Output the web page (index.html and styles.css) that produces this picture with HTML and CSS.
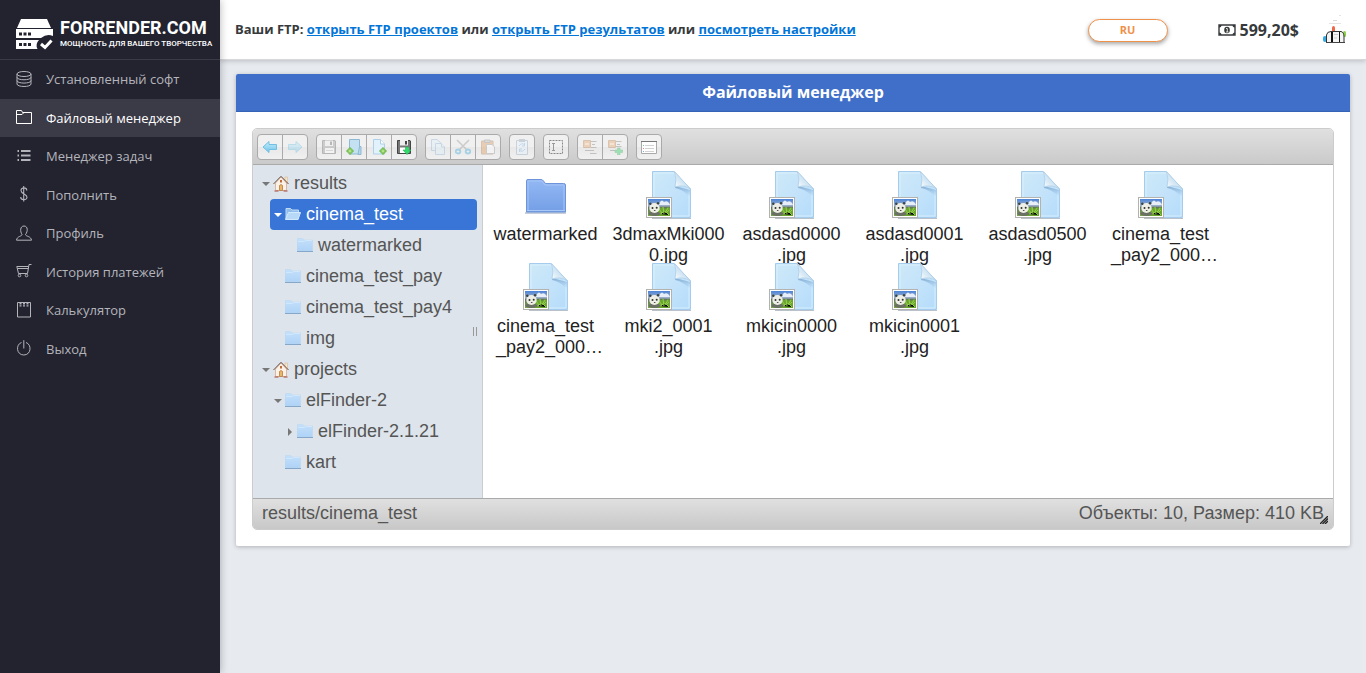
FILE: index.html
```html
<!DOCTYPE html>
<html lang="ru">
<head>
<meta charset="utf-8">
<meta name="viewport" content="width=device-width, initial-scale=1">
<title>Файловый менеджер</title>
<link rel="stylesheet" href="styles.css">
</head>
<body>
<svg class="defs" aria-hidden="true">
  <defs>
    <linearGradient id="g-page" x1="0" y1="0" x2="1" y2="1"><stop offset="0" stop-color="#cde9f8"/><stop offset="0.5" stop-color="#c4e3fa"/><stop offset="1" stop-color="#b4dcfb"/></linearGradient>
    <linearGradient id="g-fold" x1="0" y1="1" x2="1" y2="0"><stop offset="0" stop-color="#ffffff"/><stop offset="0.5" stop-color="#cbe2f2"/><stop offset="1" stop-color="#8fb8dc"/></linearGradient>
    <linearGradient id="g-shade" x1="0" y1="0" x2="0" y2="1"><stop offset="0" stop-color="#6c9ac4" stop-opacity=".8"/><stop offset="1" stop-color="#9cc8ee" stop-opacity="0"/></linearGradient>
    <linearGradient id="g-folder" x1="0" y1="0" x2="0" y2="1"><stop offset="0" stop-color="#93b8f4"/><stop offset="1" stop-color="#749fe6"/></linearGradient>
    <linearGradient id="g-small" x1="0" y1="0" x2="0" y2="1"><stop offset="0" stop-color="#c4e0fb"/><stop offset="1" stop-color="#aed2f6"/></linearGradient>
    <linearGradient id="g-sky" x1="0" y1="0" x2="0" y2="1"><stop offset="0" stop-color="#4c84d8"/><stop offset="0.4" stop-color="#9eb0c8"/><stop offset="0.5" stop-color="#63735f"/><stop offset="1" stop-color="#7aa848"/></linearGradient>
    <linearGradient id="g-arrow" x1="0" y1="0" x2="0" y2="1"><stop offset="0" stop-color="#c5edfb"/><stop offset="1" stop-color="#6fc3ea"/></linearGradient>
  </defs>
  <symbol id="jpg" viewBox="-1 0 48 48">
    <path d="M6 47.500H45" stroke="#8b9aa8" stroke-opacity=".6"/>
    <path d="M6.500.500H28L44.500 18V46.500H6.500Z" fill="url(#g-page)" stroke="#a5cbed"/>
    <path d="M8 2H27.500L43 18.500V45H8Z" fill="none" stroke="#dff2fd" stroke-opacity=".8"/>
    <path d="M29 15L44 19V26Q36 18 29 17Z" fill="url(#g-shade)"/>
    <path d="M28.500.500Q31 8 29 16Q37 13 44.500 18Z" fill="url(#g-fold)" stroke="#a9cbe6" stroke-width=".7"/>
    <rect x=".5" y="26.500" width="25" height="20" fill="#fff" stroke="#b4b2ae"/>
    <rect x="2" y="28" width="22" height="17" fill="url(#g-sky)"/>
    <path d="M14 31q2-3 4 0q3-2 5 1l1 2H13Z" fill="#e8eef7"/>
    <path d="M10 37l3-1 2 1 2-1 2 2 3-2 2 1V45H9Z" fill="#69a52f"/>
    <path d="M13 38l3 4M17 36l1 7M22 37l-3 5M14 43l5-3 4 4M12 41l4 2M21 41l2-2" stroke="#94cf4a"/>
    <ellipse cx="8.500" cy="42.700" rx="6" ry="2.300" fill="#6b7064"/>
    <ellipse cx="8.500" cy="37" rx="5.200" ry="5" fill="#eeeee6"/>
    <circle cx="4.300" cy="32.700" r="1.200" fill="#3c433e"/><circle cx="12" cy="32.200" r="1.200" fill="#3c433e"/>
    <circle cx="6.500" cy="37" r="1" fill="#2c332e"/><circle cx="10.700" cy="36.800" r="1" fill="#2c332e"/>
    <ellipse cx="8.700" cy="39.500" rx=".9" ry=".6" fill="#3c433e"/>
  </symbol>
  <symbol id="bigfolder" viewBox="0 0 48 48">
    <path d="M3 42H44" stroke="#8794ac" stroke-width="1.500" stroke-opacity=".6"/>
    <path d="M4.500 41V9.500Q4.500 8.500 6 8.500H19Q20.500 8.500 21.500 10L23.500 12.500H41.500Q43.500 12.500 43.500 14V41Z" fill="url(#g-folder)" stroke="#6d94d8"/>
    <path d="M6 39.500V10H20L23 14H42V39.500" fill="none" stroke="#a6c5f7"/>
    <path d="M5 39.500H43" stroke="#a9c8f8"/>
  </symbol>
  <symbol id="folder" viewBox="0 1 16 16">
    <path d="M0 14V2.500Q0 1.500 1 1.500H5.500L7.500 3H15.500V14Z" fill="url(#g-small)" stroke="#b9d6ef" stroke-width=".5"/>
    <path d="M1 4.500H7L8.500 3.500H15" fill="none" stroke="#d0e8fc"/><path d="M0 14.500H16" stroke="#86a7ca"/>
  </symbol>
  <symbol id="folder-open" viewBox="0 1 16 16">
    <path d="M1 13V2.500H5.500L7 4H13.500V13Z" fill="#8fbdec" stroke="#c0dcf5"/>
    <path d="M.5 13.500L3.500 6.500H15.500L13 13.500Z" fill="#b7d8f7" stroke="#d3e9fc"/>
  </symbol>
  <symbol id="home" viewBox="0 1 16 16">
    <path d="M12 2h2.500v6h-2.500z" fill="#f3e6cc" stroke="#d8b98e" stroke-width=".6"/>
    <path d="M2.500 8L8 2L13.500 8V15.500H2.500Z" fill="#fbf1e6" stroke="#d8b8a2"/>
    <path d="M.5 9L8 1.300L15.500 9" fill="none" stroke="#6b5048"/>
    <rect x="7" y="5" width="2" height="2.500" fill="#c0703c"/>
    <path d="M6.500 15.500V10.500Q8 8.500 9.500 10.500V15.500Z" fill="#e9b766" stroke="#b57b45" stroke-width=".8"/>
    <path d="M1.500 16H5.500M10.500 16H14.500" stroke="#a3483c"/>
  </symbol>
  <symbol id="plus" viewBox="0 0 8 8"><path d="M3 1H5V3H7V5H5V7H3V5H1V3H3Z" fill="#b0e38a" stroke="#69b545"/></symbol>
</svg>

<div class="app">
  <aside class="sidebar">
    <a class="logo" href="#">
      <svg width="38" height="32" viewBox="0 0 38 32" aria-hidden="true">
        <path d="M5 1H31L35 10H1Z" fill="#fff"/>
        <path d="M0 11H37V18Q31 15 25 20H0Z" fill="#fff"/>
        <path d="M0 22H23Q19 26 21.500 31H0Z" fill="#fff"/>
        <path d="M3 14.500h3v3h-3zM7.500 14.500h3v3h-3zM12 14.500h3v3h-3zM3 25h3v3h-3zM7.500 25h3v3h-3zM12 25h3v3h-3z" fill="#22232f"/>
        <path d="M25 26L29 29.500L35.500 22.500" fill="none" stroke="#fff" stroke-width="3"/>
      </svg>
      <span class="logo-text"><span class="logo-name">FORRENDER.COM</span><span class="logo-tag">МОЩНОСТЬ ДЛЯ ВАШЕГО ТВОРЧЕСТВА</span></span>
    </a>
    <nav class="menu">
      <a class="menu-item" href="#"><svg viewBox="0 0 16 16"><ellipse cx="8" cy="3" rx="7" ry="2.500"/><path d="M1 3V13C1 16.300 15 16.300 15 13V3M1 6.300C1 9.600 15 9.600 15 6.300M1 9.600C1 12.900 15 12.900 15 9.600"/></svg>Установленный софт</a>
      <a class="menu-item active" href="#"><svg viewBox="0 0 16 16"><path d="M.5 14.500V1.500H5.500L6.500 3.500H15.500V14.500ZM.5 5.500H6L8 3.500"/></svg>Файловый менеджер</a>
      <a class="menu-item" href="#"><svg viewBox="0 0 16 16"><path d="M5 3H14.500M5 7.500H14.500M5 12H14.500M1.500 3H3M1.500 7.500H3M1.500 12H3" stroke-width="2"/></svg>Менеджер задач</a>
      <a class="menu-item" href="#"><svg viewBox="0 0 16 16"><path d="M7.700 0V15.500M10.800 4.500C10.800 1 5 1 5 4.500S11 8 11 11.300S4.700 14.500 4.700 11" stroke-width="1.100"/></svg>Пополнить</a>
      <a class="menu-item" href="#"><svg viewBox="0 0 16 16"><path d="M6 9.500C4 6.500 4 1 8 1S12 6.500 9.500 9.500C9.500 11.500 15 11 15.500 15.200H.5C1 11 6 11.500 6 9.500Z"/></svg>Профиль</a>
      <a class="menu-item" href="#"><svg viewBox="0 0 16 16"><path d="M15.500 1.500H13L11.500 10.500H2.500L.8 3.500H12.500M1.500 5.500H12.500"/><circle cx="3.500" cy="12.500" r="1.300"/><circle cx="10.500" cy="12.500" r="1.300"/></svg>История платежей</a>
      <a class="menu-item" href="#"><svg viewBox="0 0 16 16"><path d="M1.500.500H14.500V15H1.500Z"/><path d="M4.500 1V4.500M8 1V4.500M11.500 1V4.500" stroke-width="2" stroke-dasharray="1.500 .7"/></svg>Калькулятор</a>
      <a class="menu-item" href="#"><svg viewBox="0 0 16 16"><path d="M7.800.200V8.500M5.500 2.500C-.5 4.500.3 15 7.800 15S16 4.500 10 2.500"/></svg>Выход</a>
    </nav>
  </aside>

  <div class="main">
    <header class="topbar">
      <p class="ftp">Ваши FTP: <a href="#">открыть FTP проектов</a> или <a href="#">открыть FTP результатов</a> или <a href="#">посмотреть настройки</a></p>
      <div class="account">
        <button class="lang" type="button">RU</button>
        <div class="balance">
          <svg width="18" height="12" viewBox="0 0 18 12" aria-hidden="true"><path d="M1 1H17V11H1Z" fill="#fff" stroke="#373a3c" stroke-width="1.400"/><path d="M1 1H3.500Q3.500 3.500 1 3.500ZM17 1H14.500Q14.500 3.500 17 3.500ZM1 11H3.500Q3.500 8.500 1 8.500ZM17 11H14.500Q14.500 8.500 17 8.500Z" fill="#373a3c"/><ellipse cx="9" cy="6" rx="2.800" ry="3.300" fill="#373a3c"/><path d="M8 4.500H9.300V8M8 8H10.500" fill="none" stroke="#fff" stroke-width=".8"/></svg>
          <span>599,20$</span>
        </div>
        <svg class="avatar" width="24" height="30" viewBox="0 0 24 30" role="img" aria-label="Аватар">
          <path d="M16 .5h2M6 8.500h12" stroke="#e4e4e4"/><path d="M10 5.500h4" stroke="#d8d8d8"/>
          <rect x="9" y="11" width="3" height="6" rx="1.500" fill="#ef6848"/><rect x="20" y="16" width="3" height="6" rx="1.500" fill="#8ed04b"/><rect x="0" y="21" width="4" height="6" rx="2" fill="#38a8e0"/>
          <path d="M3.500 27.500V20Q4 16.500 8 16.500H18Q21 17 21 22V27" fill="#f4f4f4" stroke="#333"/><path d="M9 17V28" stroke="#111" stroke-width="2"/><path d="M16.500 17V27" stroke="#111"/><path d="M3 27.500H22" stroke="#444"/><path d="M11 19.500h4M11 23h3" stroke="#ccc"/>
        </svg>
      </div>
    </header>

    <main class="content">
      <section class="card">
        <h1 class="card-title">Файловый менеджер</h1>
        <div class="card-body">
          <div class="finder">
            <div class="toolbar">
              <div class="group">
                <button type="button" aria-label="Назад"><svg viewBox="0 0 16 16"><path d="M1 8L7 2.500V5.500H14.500V10.500H7V13.500Z" fill="url(#g-arrow)" stroke="#72bfe2"/></svg></button>
                <button type="button" aria-label="Вперёд" disabled><svg viewBox="0 0 16 16"><path d="M15 8L9 2.500V5.500H1.500V10.500H9V13.500Z" fill="url(#g-arrow)" stroke="#72bfe2"/></svg></button>
              </div>
              <div class="group">
                <button type="button" aria-label="Сохранить" disabled><svg viewBox="0 0 16 16"><path d="M1.500 1.500H14L14.500 2V14.500H1.500Z" fill="#999" stroke="#666"/><path d="M4 1.500H12V7H4Z" fill="#eee"/><path d="M9 2.500H11V6H9Z" fill="#666"/><path d="M4 9H13V14H4Z" fill="#fff"/><path d="M5 11.500H12" stroke="#bbb"/></svg></button>
                <button type="button" aria-label="Новая папка"><svg viewBox="0 0 16 16"><path d="M3.500.500H13.500V15H3.500Z" fill="#c3e1f0" stroke="#8fb9d3"/><path d="M13.500 7.500H15V15.500H12Z" fill="#b4d8ea" stroke="#8fb9d3"/><use href="#plus" x="0" y="8" width="8" height="8"/></svg></button>
                <button type="button" aria-label="Новый файл"><svg viewBox="0 0 16 16"><path d="M2.500.500H9.500L13.500 5V15H2.500Z" fill="#e1f2fc" stroke="#afd0e7"/><path d="M9.500.500V5H13.500" fill="#fff" stroke="#afd0e7"/><use href="#plus" x="8" y="8" width="8" height="8"/></svg></button>
                <button type="button" aria-label="Скачать"><svg viewBox="0 0 16 16"><path d="M1.500 1.500H14L14.500 2V14.500H1.500Z" fill="#777" stroke="#444"/><path d="M4 1H12V6.500H4Z" fill="#eee"/><path d="M9 2H11V5.500H9Z" fill="#444"/><path d="M4 8.500H13V14H4Z" fill="#fff"/><path d="M9.500 8H12.500V11H15L11 15.500L7 11H9.500Z" fill="#31db6c" stroke="#1eb150" stroke-width=".6"/></svg></button>
              </div>
              <div class="group">
                <button type="button" aria-label="Копировать" disabled><svg viewBox="0 0 16 16"><g fill="#def0fb" stroke="#8fb4d4"><path d="M1.500.500H7L10.500 3.500V11.500H1.500Z"/><path d="M5.500 4.500H11.500L14.500 8V15.500H5.500Z"/><path d="M11.500 4.500V8H15"/></g></svg></button>
                <button type="button" aria-label="Вырезать" disabled><svg viewBox="0 0 16 16"><path d="M2 1L12 11M14 1L4 11" stroke="#999" stroke-width="1.600"/><g fill="none" stroke="#3dabdf" stroke-width="1.800"><ellipse cx="3" cy="12.500" rx="2.300" ry="2"/><ellipse cx="13" cy="12.500" rx="2.300" ry="2"/></g></svg></button>
                <button type="button" aria-label="Вставить" disabled><svg viewBox="0 0 16 16"><path d="M1.500 2H13V15H1.500Z" fill="#dd9a58" stroke="#b58056"/><path d="M4.500 1H10V3.500H4.500Z" fill="#bbb" stroke="#888"/><path d="M6.500 5.500H12L14.500 8V14.500H6.500Z" fill="#fff" stroke="#999"/></svg></button>
              </div>
              <div class="group">
                <button type="button" aria-label="Дублировать" disabled><svg viewBox="0 0 16 16"><path d="M2.500 1.500H13.500V15.500H2.500Z" fill="#e8f4fd" stroke="#92a9c0"/><path d="M5 0H11V3H5Z" fill="#94a4b4"/><path d="M5 7Q8 3 10.500 6M10.500 4V7H8M11 10Q8 14 5.500 11M5.500 13V10H8" fill="none" stroke="#7fb2e4"/></svg></button>
              </div>
              <div class="group">
                <button type="button" aria-label="Выделить всё"><svg viewBox="0 0 16 16"><path d="M1.500 1.500H14.500V14.500H1.500Z" fill="none" stroke="#888" stroke-dasharray="2 1"/><path d="M4 4.500H7M4 11.500H7M5.500 4.500V11.500" stroke="#999"/></svg></button>
              </div>
              <div class="group">
                <button type="button" aria-label="Распаковать" disabled><svg viewBox="0 0 16 16"><path d="M1.500 1.500H8.500V8.500H1.500Z" fill="#e8a263" stroke="#b98353"/><path d="M3 5H7" stroke="#fff"/><path d="M9 2.500H14.500M10 5.500H13M9 8.500H14.500M3 11.500H12M8 14.500H14.500" stroke="#8a8078"/></svg></button>
                <button type="button" aria-label="Архивировать" disabled><svg viewBox="0 0 16 16"><path d="M1.500 1.500H8.500V8.500H1.500Z" fill="#e8a263" stroke="#b98353"/><path d="M3 5H7" stroke="#fff"/><path d="M9 2.500H14.500M10 5.500H13M9 7.500H14.500M3 11.500H9" stroke="#8a8078"/><path d="M10.500 9h2.500v2h2.500v2.500H13V16h-2.500v-2.500H8V11h2.500z" fill="#2ed062" stroke="#25a44c" stroke-width=".6"/></svg></button>
              </div>
              <div class="group">
                <button type="button" aria-label="Вид списком"><svg viewBox="0 0 16 16"><path d="M.5 2.500H15.500V14.500H.5Z" fill="#fff" stroke="#aaa"/><path d="M0 2.500H16" stroke="#777"/><path d="M4 6.500H13M4 9.500H13M4 12.500H13" stroke="#d2d2d2"/><path d="M2 6.500H3" stroke="#7fca88"/><path d="M2 9.500H3" stroke="#e48d86"/><path d="M2 12.500H3" stroke="#85a9e5"/></svg></button>
              </div>
            </div>

            <div class="workzone">
              <div class="tree-pane">
                <ul class="tree">
                  <li><a class="node" href="#"><i class="arrow down"></i><svg><use href="#home"/></svg>results</a>
                    <ul>
                      <li><a class="node selected" href="#"><i class="arrow down"></i><svg><use href="#folder-open"/></svg>cinema_test</a>
                        <ul><li><a class="node" href="#"><i class="arrow"></i><svg><use href="#folder"/></svg>watermarked</a></li></ul>
                      </li>
                      <li><a class="node" href="#"><i class="arrow"></i><svg><use href="#folder"/></svg>cinema_test_pay</a></li>
                      <li><a class="node" href="#"><i class="arrow"></i><svg><use href="#folder"/></svg>cinema_test_pay4</a></li>
                      <li><a class="node" href="#"><i class="arrow"></i><svg><use href="#folder"/></svg>img</a></li>
                    </ul>
                  </li>
                  <li><a class="node" href="#"><i class="arrow down"></i><svg><use href="#home"/></svg>projects</a>
                    <ul>
                      <li><a class="node" href="#"><i class="arrow down"></i><svg><use href="#folder"/></svg>elFinder-2</a>
                        <ul><li><a class="node" href="#"><i class="arrow right"></i><svg><use href="#folder"/></svg>elFinder-2.1.21</a></li></ul>
                      </li>
                      <li><a class="node" href="#"><i class="arrow"></i><svg><use href="#folder"/></svg>kart</a></li>
                    </ul>
                  </li>
                </ul>
                <span class="splitter"></span>
              </div>
              <div class="files">
                <div class="file"><svg><use href="#bigfolder"/></svg><span>watermarked</span></div>
                <div class="file"><svg><use href="#jpg"/></svg><span>3dmaxMki000<br>0.jpg</span></div>
                <div class="file"><svg><use href="#jpg"/></svg><span>asdasd0000<br>.jpg</span></div>
                <div class="file"><svg><use href="#jpg"/></svg><span>asdasd0001<br>.jpg</span></div>
                <div class="file"><svg><use href="#jpg"/></svg><span>asdasd0500<br>.jpg</span></div>
                <div class="file"><svg><use href="#jpg"/></svg><span>cinema_test<br><span class="cut">_pay2_000…</span></span></div>
                <div class="file"><svg><use href="#jpg"/></svg><span>cinema_test<br><span class="cut">_pay2_000…</span></span></div>
                <div class="file"><svg><use href="#jpg"/></svg><span>mki2_0001<br>.jpg</span></div>
                <div class="file"><svg><use href="#jpg"/></svg><span>mkicin0000<br>.jpg</span></div>
                <div class="file"><svg><use href="#jpg"/></svg><span>mkicin0001<br>.jpg</span></div>
              </div>
            </div>

            <div class="statusbar">
              <span>results/cinema_test</span>
              <span>Объекты: 10, Размер: 410 KB</span>
              <svg class="resize" width="8" height="8" viewBox="0 0 8 8" aria-hidden="true"><path d="M0 8L8 0M2.500 8L8 2.500M5 8L8 5" stroke="#222" stroke-width="1.300"/></svg>
            </div>
          </div>
        </div>
      </section>
    </main>
  </div>
</div>
</body>
</html>
```
FILE: styles.css
```css
* { box-sizing: border-box; }

body {
  margin: 0;
  background: #e7eaef;
  color: #373a3c;
  font: 13px/1.5 "Open Sans", "Noto Sans", sans-serif;
}

a { color: inherit; text-decoration: none; }
ul { margin: 0; padding: 0; list-style: none; }
.defs { position: absolute; width: 0; height: 0; }

.app { display: flex; min-height: 100vh; }

/* Sidebar */
.sidebar {
  z-index: 1;
  flex: 0 0 220px;
  background: #22232f;
  box-shadow: 0 0 8px rgba(0, 0, 0, .3);
}

.logo {
  display: flex;
  align-items: center;
  gap: 6px;
  height: 60px;
  padding: 8px 0 0 16px;
  border-bottom: 1px solid #3b3a47;
  color: #fff;
  font-family: Roboto, sans-serif;
  font-weight: 700;
}

.logo-text { display: flex; flex-direction: column; white-space: nowrap; }
.logo-name { font-size: 18px; line-height: 20px; }
.logo-tag { font-size: 8px; font-weight: 500; line-height: 11px; }

.menu-item {
  display: flex;
  align-items: center;
  gap: 14px;
  padding: 10px 16px 9px;
  color: #b4b4bb;
}

.menu-item.active { background: #3b3a47; color: #fff; }
.menu-item svg { width: 16px; height: 16px; margin-bottom: 2px; fill: none; stroke: currentColor; }

/* Top bar */
.main { flex: 1; min-width: 0; }

.topbar {
  display: flex;
  align-items: center;
  justify-content: space-between;
  height: 60px;
  padding: 1px 19px 0 15px;
  border-bottom: 1px solid #d8d8da;
  background: #fff;
  box-shadow: 0 1px 5px rgba(0, 0, 0, .2);
}

.ftp { margin: 0; font-weight: 700; }
.ftp a { color: #0275d8; text-decoration: underline; }

.account { display: flex; align-items: center; }

.lang {
  width: 80px;
  height: 23px;
  margin-right: 50px;
  padding: 0;
  border: 1px solid #f0914a;
  border-radius: 12px;
  background: #fff;
  box-shadow: 0 2px 4px rgba(0, 0, 0, .35);
  color: #f0914a;
  font: 700 11px/20px "Open Sans", sans-serif;
}

.balance {
  display: flex;
  align-items: center;
  gap: 4px;
  margin-right: 24px;
  font-size: 16px;
  font-weight: 700;
}

/* Card */
.content { padding: 14px 16px; }

.card {
  border-radius: 2px;
  background: #fff;
  box-shadow: 0 1px 4px rgba(0, 0, 0, .25);
}

.card-title {
  margin: 0;
  padding: 6px 0 7px;
  border-bottom: 1px solid #3563b5;
  border-radius: 2px 2px 0 0;
  background: #3f6fc9;
  color: #fff;
  font-size: 16px;
  line-height: 24px;
  text-align: center;
}

.card-body { padding: 16px; }

/* File manager */
.finder {
  overflow: hidden;
  border: 1px solid #ccc;
  border-radius: 5px;
  color: #555;
  font: 18px/21px "Liberation Sans", Arial, sans-serif;
}

.toolbar {
  display: flex;
  gap: 8px;
  padding: 5px 4px 4px;
  border-bottom: 1px solid #aaa;
  background: linear-gradient(#e0e0e0, #cacaca);
}

.group {
  display: flex;
  height: 26px;
  border: 1px solid #aaa;
  border-radius: 4px;
  background: linear-gradient(#f0f0f0 50%, #e8e8e8 50%, #f0f0f0);
}

.group button {
  display: grid;
  place-items: center;
  width: 24px;
  padding: 0;
  border: 0;
  background: none;
}

.group button + button { width: 25px; border-left: 1px solid #aaa; }
.group svg { width: 16px; height: 16px; }
.group button:disabled svg { opacity: .4; }

.workzone { display: flex; min-height: 333px; background: #fff; }

.tree-pane {
  position: relative;
  flex: 0 0 230px;
  padding: 3px 5px;
  border-right: 1px solid #ccc;
  background: #dde4eb;
}

.tree ul { padding-left: 12px; }

.node {
  display: flex;
  align-items: center;
  height: 31px;
  padding-left: 3px;
  border-radius: 4px;
  white-space: nowrap;
}

.node svg { width: 16px; height: 16px; margin-right: 5px; }
.node.selected { background: #3875d7; color: #fff; }

.arrow { display: flex; justify-content: center; width: 12px; padding-right: 3px; color: #777; }
.selected .arrow { color: #fff; }
.arrow.down::before { content: ""; border: 4px solid transparent; border-top-color: currentColor; border-bottom: 0; }
.arrow.right::before { content: ""; border: 4px solid transparent; border-left-color: currentColor; border-right: 0; }

.splitter {
  position: absolute;
  top: 50%;
  right: 5px;
  width: 4px;
  height: 9px;
  margin-top: -5px;
  border: solid #999;
  border-width: 0 1px;
}

.files {
  display: grid;
  flex: 1;
  grid-template-columns: repeat(auto-fill, 123px);
  grid-auto-rows: 92px;
  align-content: start;
  padding: 6px 0 6px 1px;
  color: #222;
  text-align: center;
}

.file { display: flex; flex-direction: column; align-items: center; gap: 5px; }
.file svg { flex: none; width: 48px; height: 48px; }
.cut { padding-left: 8px; }

.statusbar {
  position: relative;
  display: flex;
  justify-content: space-between;
  padding: 4px 9px 5px;
  border-top: 1px solid #aaa;
  background: linear-gradient(#e0e0e0, #c8c8c8);
}

.resize { position: absolute; right: 5px; bottom: 5px; }
```
